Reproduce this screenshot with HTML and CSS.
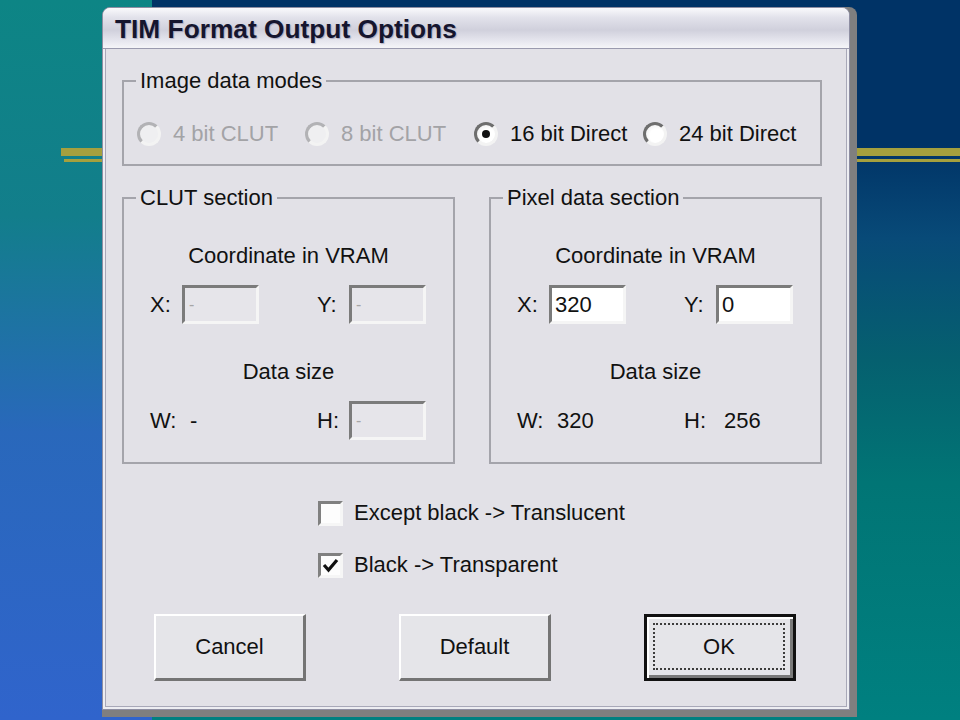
FILE: index.html
```html
<!DOCTYPE html>
<html lang="en">
  <head>
    <meta charset="UTF-8" />
    <meta name="viewport" content="width=device-width, initial-scale=1.0" />
    <title>TIM Format Output Options</title>
    <link rel="stylesheet" href="styles.css">
  </head>
  <body>
    <div class="slide">
      <div class="dialog">
        <div class="titlebar">TIM Format Output Options</div>

        <div class="client">
          <!-- Image data modes -->
          <fieldset class="group modes">
            <legend>Image data modes</legend>
            <div class="radio-row">
              <label class="radio disabled"><span class="knob"></span>4 bit CLUT</label>
              <label class="radio disabled"><span class="knob"></span>8 bit CLUT</label>
              <label class="radio"><span class="knob checked"></span>16 bit Direct</label>
              <label class="radio"><span class="knob"></span>24 bit Direct</label>
            </div>
          </fieldset>

          <div class="sections">
            <!-- CLUT section -->
            <fieldset class="group section">
              <legend>CLUT section</legend>
              <div class="caption">Coordinate in VRAM</div>
              <div class="row">
                <span class="lbl">X:</span><span class="edit disabled">-</span>
                <span></span>
                <span class="lbl">Y:</span><span class="edit disabled">-</span>
              </div>
              <div class="caption">Data size</div>
              <div class="row">
                <span class="lbl">W:</span><span class="value">-</span>
                <span></span>
                <span class="lbl">H:</span><span class="edit disabled">-</span>
              </div>
            </fieldset>

            <!-- Pixel data section -->
            <fieldset class="group section">
              <legend>Pixel data section</legend>
              <div class="caption">Coordinate in VRAM</div>
              <div class="row">
                <span class="lbl">X:</span><span class="edit">320</span>
                <span></span>
                <span class="lbl">Y:</span><span class="edit">0</span>
              </div>
              <div class="caption">Data size</div>
              <div class="row">
                <span class="lbl">W:</span><span class="value">320</span>
                <span></span>
                <span class="lbl">H:</span><span class="value">256</span>
              </div>
            </fieldset>
          </div>

          <!-- Options -->
          <div class="checks">
            <label class="check"><span class="box"></span>Except black -&gt; Translucent</label>
            <label class="check">
              <span class="box">
                <svg width="19" height="19" viewBox="0 0 19 19"><polyline points="3,9 7.5,14 16,4" fill="none" stroke="#111" stroke-width="3.2"/></svg>
              </span>Black -&gt; Transparent
            </label>
          </div>

          <div class="buttons">
            <button class="btn"><span class="face">Cancel</span></button>
            <button class="btn"><span class="face">Default</span></button>
            <button class="btn btn-ok"><span class="face">OK</span></button>
          </div>
        </div>
      </div>
    </div>
  </body>
</html>
```

FILE: styles.css
```css
/* Slide background with the dialog on top */
* {
  box-sizing: border-box;
}
body {
  margin: 0;
  font-family: "Liberation Sans", Arial, sans-serif;
  font-size: 22px;
  color: #111;
}
.slide {
  width: 960px;
  height: 720px;
  overflow: hidden;
  padding: 7px 0 0 102px;
  background:
    linear-gradient(#a5a03e, #a5a03e) 61px 148px / 899px 8px no-repeat,
    linear-gradient(#a5a03e, #a5a03e) 64px 159px / 896px 3px no-repeat,
    linear-gradient(#0d8585 0%, #127e8b 30%, #2968bb 60%, #3064cc 100%) 0 0 / 152px 100% no-repeat,
    linear-gradient(#003366 0%, #003366 20%, #084a78 33%, #05606f 50%, #017575 67%, #008080 100%);
}
.dialog {
  width: 748px;
  height: 703px;
  display: flex;
  flex-direction: column;
  background: #ededf2;
  border: 1px solid #8e8ea2;
  border-radius: 8px 8px 0 0;
  box-shadow: 7px 0 0 #7f7f7f, 7px 7px 0 #7f7f7f, 0 7px 0 #7f7f7f;
}
.titlebar {
  height: 41px;
  padding: 2px 0 0 12px;
  line-height: 38px;
  font-size: 26.3px;
  font-weight: bold;
  color: #15152e;
  text-shadow: 1px 1px 1px rgba(110, 110, 150, 0.45);
  border-bottom: 1px solid #9a9aae;
  border-radius: 7px 7px 0 0;
  background: linear-gradient(#fafafc 0%, #e1e1ea 25%, #d0d0dc 55%, #e6e6ee 82%, #f5f5f8 100%);
}
.client {
  flex: 1;
  margin: 0 2px 2px;
  padding: 19px 0 0 16px;
  border: 1px solid #a8a8b8;
  border-top: none;
  background: #e2e1e7;
}

/* Group boxes */
.group {
  margin: 0;
  padding: 0;
  border: 2px solid #a4a4ab;
  min-inline-size: 0;
}
.group legend {
  margin-left: 12px;
  padding: 0 4px;
  line-height: 26px;
}
.modes {
  width: 700px;
  padding-bottom: 17px;
}
.radio-row {
  display: grid;
  grid-template-columns: 168px 169px 169px auto;
  height: 26px;
  margin-top: 27px;
  padding-left: 13px;
}
.radio {
  display: flex;
  align-items: center;
  gap: 12px;
  white-space: nowrap;
}
.radio.disabled {
  color: #a3a3a6;
}
.knob {
  width: 24px;
  height: 24px;
  border-radius: 50%;
  border: 3px solid;
  border-color: #6e6e6e #f3f3f3 #f3f3f3 #6e6e6e;
  background: radial-gradient(circle at 60% 60%, #ffffff 45%, #e8e8ea 100%);
  display: flex;
  align-items: center;
  justify-content: center;
}
.radio.disabled .knob {
  border-color: #b2b2b5 #f3f3f3 #f3f3f3 #b2b2b5;
  background: #efeff1;
}
.knob.checked::after {
  content: "";
  width: 8px;
  height: 8px;
  border-radius: 50%;
  background: #111;
}

/* CLUT / Pixel sections */
.sections {
  display: flex;
  gap: 34px;
  margin-top: 19px;
}
.section {
  width: 333px;
  padding-bottom: 22px;
}
.caption {
  margin-top: 32px;
  line-height: 26px;
  text-align: center;
}
.row + .caption {
  margin-top: 35px;
}
.row {
  display: grid;
  grid-template-columns: 32px 77px 58px 32px 77px;
  align-items: center;
  height: 39px;
  margin-top: 16px;
  padding-left: 26px;
}
.edit {
  height: 39px;
  padding-left: 3px;
  line-height: 33px;
  border: 3px solid;
  border-color: #7b7b7b #f5f5f5 #f5f5f5 #7b7b7b;
  background: #fff;
}
.edit.disabled {
  background: #e6e5ea;
  color: #a6a6a6;
  font-size: 16px;
  padding-left: 4px;
}
.value {
  padding-left: 8px;
}

/* Check boxes */
.checks {
  display: flex;
  flex-direction: column;
  gap: 26px;
  margin: 36px 0 0 196px;
}
.check {
  display: flex;
  align-items: center;
  gap: 11px;
  height: 26px;
}
.box {
  width: 25px;
  height: 25px;
  border: 3px solid;
  border-color: #808080 #f6f6f6 #f6f6f6 #808080;
  background: #fdfdfd;
  display: flex;
  align-items: center;
  justify-content: center;
}

/* Buttons */
.buttons {
  display: flex;
  gap: 93px;
  margin: 36px 0 0 32px;
}
.btn {
  width: 152px;
  height: 67px;
  padding: 0;
  font: inherit;
  color: #111;
  background: #e5e5e9;
  border-style: solid;
  border-width: 2px 3px 3px 2px;
  border-color: #ffffff #747474 #747474 #ffffff;
  display: flex;
}
.face {
  flex: 1;
  display: flex;
  align-items: center;
  justify-content: center;
}
.btn-ok {
  border: 3px solid #111;
  box-shadow: inset 2px 2px 0 #ffffff, inset -3px -3px 0 #7a7a7a;
  padding: 6px 8px 8px 6px;
}
.btn-ok .face {
  border: 2px dotted #3c3c3c;
}
```
